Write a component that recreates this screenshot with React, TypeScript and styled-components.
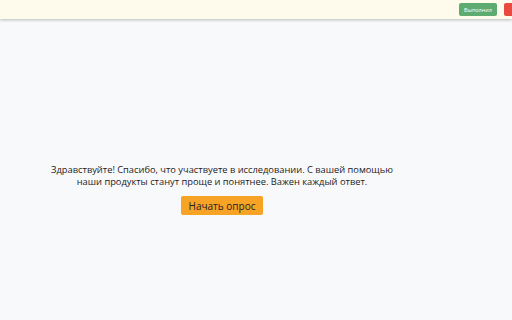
import styled, { createGlobalStyle } from 'styled-components';

const GlobalStyle = createGlobalStyle`
  html, body {
    margin: 0;
    padding: 0;
    background: #f8f9fb;
    font-family: 'Open Sans', 'Liberation Sans', sans-serif;
  }
`;

const Page = styled.div`
  min-height: 320px;
  display: flex;
  flex-direction: column;
`;

const Header = styled.header`
  height: 19px;
  background: #fffbec;
  box-shadow: 0 1px 3px rgba(0, 0, 0, 0.25);
  display: flex;
  align-items: center;
  justify-content: flex-end;
  gap: 7px;
  overflow: hidden;
`;

const HeaderButton = styled.button<{ $color: string; $width: number }>`
  height: 13px;
  width: ${(p) => p.$width}px;
  flex-shrink: 0;
  border: none;
  border-radius: 2px;
  background: ${(p) => p.$color};
  color: #fff;
  font-family: 'Open Sans', sans-serif;
  font-size: 5.5px;
  padding: 0;
  margin-right: ${(p) => (p.$width < 20 ? '-4px' : '0')};
`;

const Main = styled.main`
  flex: 1;
  display: flex;
  flex-direction: column;
  align-items: center;
  padding: 145px 68px 0 0;
`;

const Greeting = styled.p`
  margin: 0;
  text-align: center;
  font-size: 9.3px;
  line-height: 12px;
  color: #222;
  width: 360px;
`;

const StartButton = styled.button`
  margin-top: 8px;
  width: 82px;
  height: 19px;
  border: none;
  border-radius: 2px;
  background: #f7a325;
  color: #222;
  font-family: 'Open Sans', sans-serif;
  font-size: 10px;
  padding: 0;
`;

export default function App() {
  return (
    <>
      <GlobalStyle />
      <Page>
        <Header>
          <HeaderButton $color="#5eab72" $width={38}>Выполнил</HeaderButton>
          <HeaderButton $color="#e84a3f" $width={12} />
        </Header>
        <Main>
          <Greeting>
            Здравствуйте! Спасибо, что участвуете в исследовании. С вашей помощью
            наши продукты станут проще и понятнее. Важен каждый ответ.
          </Greeting>
          <StartButton>Начать опрос</StartButton>
        </Main>
      </Page>
    </>
  );
}
